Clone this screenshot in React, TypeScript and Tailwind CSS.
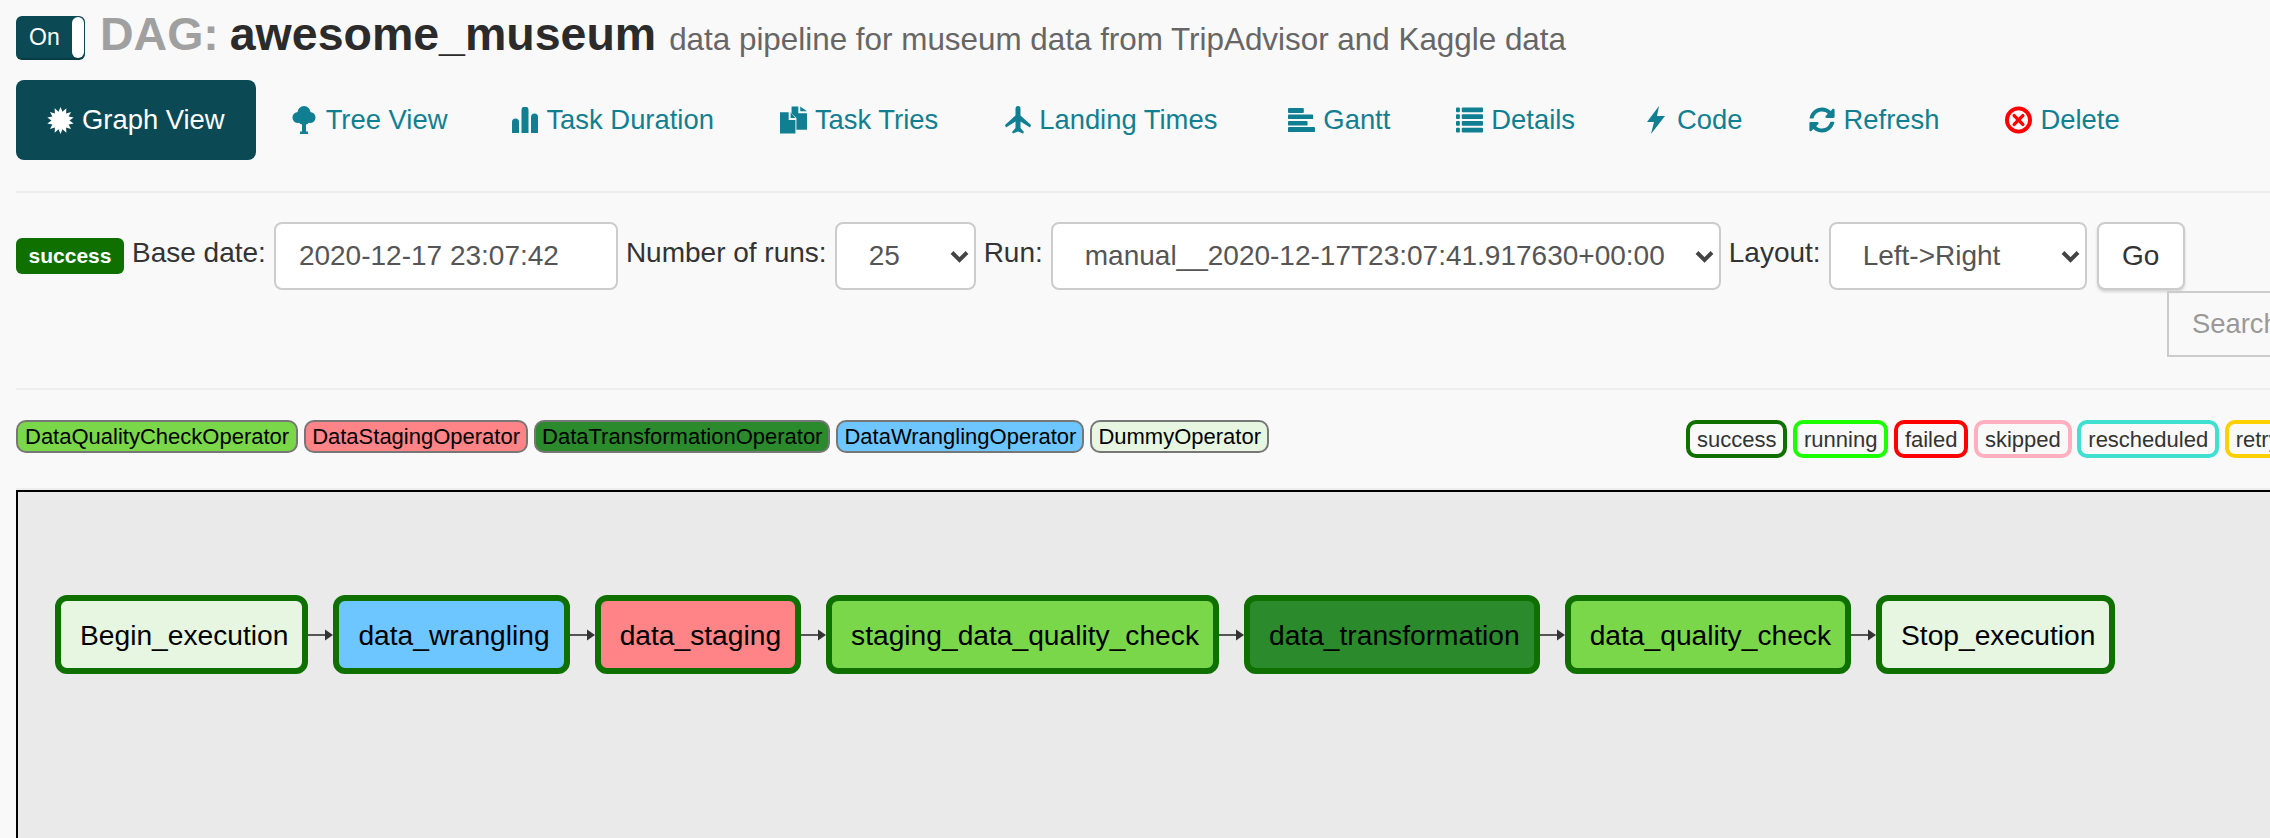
import { FaSyncAlt } from 'react-icons/fa';

const TEAL = '#117f92';

function Burst() {
  const pts: string[] = [];
  for (let i = 0; i < 28; i++) {
    const r = i % 2 === 0 ? 13.5 : 9;
    const a = (i * Math.PI) / 14;
    pts.push(`${(13.5 + r * Math.sin(a)).toFixed(2)},${(13.5 - r * Math.cos(a)).toFixed(2)}`);
  }
  return (
    <svg width="27" height="27" viewBox="0 0 27 27" fill="white">
      <polygon points={pts.join(' ')} />
    </svg>
  );
}

function Tree() {
  return (
    <svg width="24" height="28" viewBox="0 0 24 28" fill={TEAL}>
      <circle cx="12" cy="6.5" r="6.5" />
      <circle cx="6" cy="11.5" r="5.5" />
      <circle cx="18" cy="11.5" r="5.5" />
      <circle cx="12" cy="13" r="6" />
      <rect x="10" y="15" width="4" height="12" />
      <rect x="8" y="25.5" width="8" height="2.5" />
    </svg>
  );
}

function Stats() {
  return (
    <svg width="26" height="26" viewBox="0 0 26 26" fill={TEAL}>
      <path d="M0 26V15a3.5 3.5 0 0 1 7 0v11z" />
      <path d="M9.5 26V3a3.5 3.5 0 0 1 7 0v23z" />
      <path d="M19 26V10a3.5 3.5 0 0 1 7 0v16z" />
    </svg>
  );
}

function Duplicate() {
  return (
    <svg width="28" height="28" viewBox="0 0 28 28" fill={TEAL}>
      <path d="M12 0h7v7h9v17H17V12l-5-5z" />
      <path d="M21 0l7 5h-7z" />
      <path d="M0 6h9v8h7v14H0z" />
      <path d="M11 6l5 6h-5z" />
    </svg>
  );
}

function Plane() {
  return (
    <svg width="26" height="28" viewBox="0 0 26 28" fill={TEAL}>
      <path d="M10.5 3a2.5 3 0 0 1 5 0v6.5L26 19l-1 2.5-9.5-6V22l3.5 4-1 1.5-5-2-5 2-1-1.5 3.500-4v-6.500L1 21.500 0 19l10.500-9.500z" />
    </svg>
  );
}

function Gantt() {
  return (
    <svg width="29" height="26" viewBox="0 0 29 26" fill={TEAL}>
      <rect width="17" height="5.500" rx="1" />
      <rect y="7" width="27" height="5" rx="1" />
      <rect y="14" width="21" height="5" rx="1" />
      <rect y="20.500" width="29" height="5.500" rx="1" />
    </svg>
  );
}

function List() {
  return (
    <svg width="28" height="26" viewBox="0 0 28 26" fill={TEAL}>
      {[0, 7, 14, 21].map((y) => (
        <g key={y}>
          <rect y={y} width="4" height="5" rx="1" />
          <rect x="6" y={y} width="22" height="5" rx="1" />
        </g>
      ))}
    </svg>
  );
}

function Bolt() {
  return (
    <svg width="18" height="28" viewBox="0 0 18 28" fill={TEAL}>
      <polygon points="12,0 0,16 7,16 4,28 18,10 10,10" />
    </svg>
  );
}

function Remove() {
  return (
    <svg width="28" height="28" viewBox="0 0 28 28">
      <circle cx="14" cy="14" r="12" fill="none" stroke="#f00" strokeWidth="4" />
      <path d="M9.500 9.500l9 9m0-9l-9 9" stroke="#f00" strokeWidth="3.500" strokeLinecap="round" />
    </svg>
  );
}

function Chevron() {
  return (
    <svg
      className="pointer-events-none absolute right-[7px] top-[28px]"
      width="19"
      height="13"
      viewBox="0 0 19 13"
      fill="none"
      stroke="#444"
      strokeWidth="4"
    >
      <path d="M2 2.500l7.500 7.500 7.500-7.500" />
    </svg>
  );
}

const tabs = [
  { label: 'Tree View', icon: <Tree />, extra: '-ml-[1px]' },
  { label: 'Task Duration', icon: <Stats />, extra: '-ml-[2px]' },
  { label: 'Task Tries', icon: <Duplicate />, extra: '' },
  { label: 'Landing Times', icon: <Plane />, extra: '' },
  { label: 'Gantt', icon: <Gantt />, extra: 'ml-[5px]' },
  { label: 'Details', icon: <List />, extra: '' },
  { label: 'Code', icon: <Bolt />, extra: 'ml-[1px]' },
  { label: 'Refresh', icon: <FaSyncAlt size={26} color={TEAL} />, extra: '' },
  { label: 'Delete', icon: <Remove />, extra: '' },
];

const operators = [
  { name: 'DataQualityCheckOperator', bg: 'bg-[#7ad749] px-[7px]' },
  { name: 'DataStagingOperator', bg: 'bg-[#ff8488] px-[6px]' },
  { name: 'DataTransformationOperator', bg: 'bg-[#2b8a2b] px-[6px]' },
  { name: 'DataWranglingOperator', bg: 'bg-[#6dc6ff] px-[6px]' },
  { name: 'DummyOperator', bg: 'bg-[#e6f6e0] px-[6px]' },
];

const states = [
  { name: 'success', border: 'border-[#0f7000]' },
  { name: 'running', border: 'border-[#1bff00]' },
  { name: 'failed', border: 'border-[#ff0000]' },
  { name: 'skipped', border: 'border-[#ffb0c0]' },
  { name: 'rescheduled', border: 'border-[#40e0d0]' },
  { name: 'retry', border: 'border-[#ffd000]' },
];

const nodes = [
  { name: 'Begin_execution', bg: 'bg-[#e6f6e0]' },
  { name: 'data_wrangling', bg: 'bg-[#6dc6ff]' },
  { name: 'data_staging', bg: 'bg-[#ff8488]' },
  { name: 'staging_data_quality_check', bg: 'bg-[#7ad749]' },
  { name: 'data_transformation', bg: 'bg-[#2b8a2b]' },
  { name: 'data_quality_check', bg: 'bg-[#7ad749]' },
  { name: 'Stop_execution', bg: 'bg-[#e6f6e0]' },
];

function Arrow() {
  return (
    <svg width="25" height="14" viewBox="0 0 25 14" className="shrink-0">
      <path d="M0 7h18" stroke="#555" strokeWidth="2" />
      <path d="M17 1.500L25 7l-8 5.500z" fill="#333" />
    </svg>
  );
}

export default function App() {
  return (
    <div className="h-screen w-full overflow-hidden bg-[#f9f9f9] pl-4 font-['Liberation_Sans',Arial,sans-serif] text-[#333]">
      <div className="flex h-[60px] items-start pt-4">
        <div className="relative flex h-[44px] w-[69px] shrink-0 items-center rounded-[6px] border-b-2 border-[#083c45] bg-[#0b4a55] pl-[13px] text-[23px] text-white">
          On
          <span className="absolute right-[1px] top-[1px] h-[41px] w-[12px] rounded-[6px] bg-white" />
        </div>
        <h3 className="-mt-[5px] ml-[15px] whitespace-nowrap text-[46.5px] leading-[46px] font-bold text-[#2b2b2b]">
          <span className="mr-[-2px] text-[#a0a0a0]">DAG: </span>
          awesome_museum <span className="text-[31.4px] font-normal text-[#666]">data pipeline for museum data from TripAdvisor and Kaggle data</span>
        </h3>
      </div>

      <nav className="mt-5 flex h-[80px] items-stretch gap-[6px] text-[27.4px] whitespace-nowrap">
        <div className="flex items-center gap-2 rounded-lg bg-[#0b4a55] pr-[31px] pl-[31px] text-white">
          <Burst />
          Graph View
        </div>
        {tabs.map((t) => (
          <a key={t.label} className={`flex items-center gap-2 px-[30px] text-[#117f92] ${t.extra}`}>
            <span className="flex w-[27px] justify-center">{t.icon}</span>
            {t.label}
          </a>
        ))}
      </nav>

      <hr className="mt-[31px] h-[2px] border-0 bg-[#eeeeee]" />

      <div className="mt-[29px] flex h-[68px] items-center gap-[8px] text-[28px] whitespace-nowrap">
        <span className="flex h-[36px] w-[108px] items-center justify-center rounded-[6px] bg-[#0f7000] text-[21px] font-bold text-white">
          success
        </span>
        <label className="mb-[6px]">Base date:</label>
        <input
          readOnly
          value="2020-12-17 23:07:42"
          className="h-[68px] w-[344px] rounded-lg border-2 border-[#cccccc] bg-white pl-[23px] text-[28px] text-[#555] outline-none"
        />
        <label className="mb-[6px]">Number of runs:</label>
        <div className="relative h-[68px] w-[141px]">
          <select defaultValue="25" className="h-full w-full appearance-none rounded-lg border-2 border-[#cccccc] bg-white pl-[32px] text-[28px] text-[#555] outline-none">
            <option>25</option>
          </select>
          <Chevron />
        </div>
        <label className="mb-[6px]">Run:</label>
        <div className="relative h-[68px] w-[670px]">
          <select className="h-full w-full appearance-none rounded-lg border-2 border-[#cccccc] bg-white pl-[32px] text-[28px] text-[#555] outline-none">
            <option>manual__2020-12-17T23:07:41.917630+00:00</option>
          </select>
          <Chevron />
        </div>
        <label className="mb-[6px]">Layout:</label>
        <div className="relative h-[68px] w-[258px]">
          <select className="h-full w-full appearance-none rounded-lg border-2 border-[#cccccc] bg-white pl-[32px] text-[28px] text-[#555] outline-none">
            <option>{'Left->Right'}</option>
          </select>
          <Chevron />
        </div>
        <button className="ml-[2px] h-[68px] w-[88px] rounded-lg border-2 border-[#cccccc] bg-white text-[28px] text-[#333] shadow-[0_2px_3px_rgba(0,0,0,0.15)]">
          Go
        </button>
      </div>

      <div className="mt-[1px] ml-[2151px] h-[66px]">
        <input
          placeholder="Search"
          className="h-full w-[300px] border-2 border-[#cccccc] bg-transparent pl-[23px] text-[27.4px] outline-none placeholder:text-[#999]"
        />
      </div>

      <hr className="mt-[31px] h-[2px] border-0 bg-[#eeeeee]" />

      <div className="mt-[30px] flex h-[38px] items-start text-[22px] whitespace-nowrap">
        <div className="flex w-[1670px] shrink-0 gap-[6px] text-black">
          {operators.map((o) => (
            <span key={o.name} className={`flex h-[33px] items-center rounded-[10px] border-2 border-[#777] ${o.bg}`}>
              {o.name}
            </span>
          ))}
        </div>
        <div className="flex shrink-0 gap-[5.5px]">
          {states.map((s) => (
            <span key={s.name} className={`flex h-[38px] items-center rounded-[10px] border-4 bg-[#f9f9f9] px-[7px] ${s.border}`}>
              {s.name}
            </span>
          ))}
        </div>
      </div>

      <hr className="mt-[30px] h-[2px] border-0 bg-[#eeeeee]" />

      <div className="h-[400px] w-[2400px] border-2 border-black bg-[#eaeaea] pt-[103px] pl-[37px]">
        <div className="flex items-center text-[28.2px] text-black">
          {nodes.map((n, i) => (
            <div key={n.name} className="flex items-center">
              {i > 0 && <Arrow />}
              <div className={`flex h-[79px] items-center rounded-[12px] border-[6px] border-[#0f7000] pt-[2px] pr-[14px] pl-[19px] ${n.bg}`}>{n.name}</div>
            </div>
          ))}
        </div>
      </div>
    </div>
  );
}
